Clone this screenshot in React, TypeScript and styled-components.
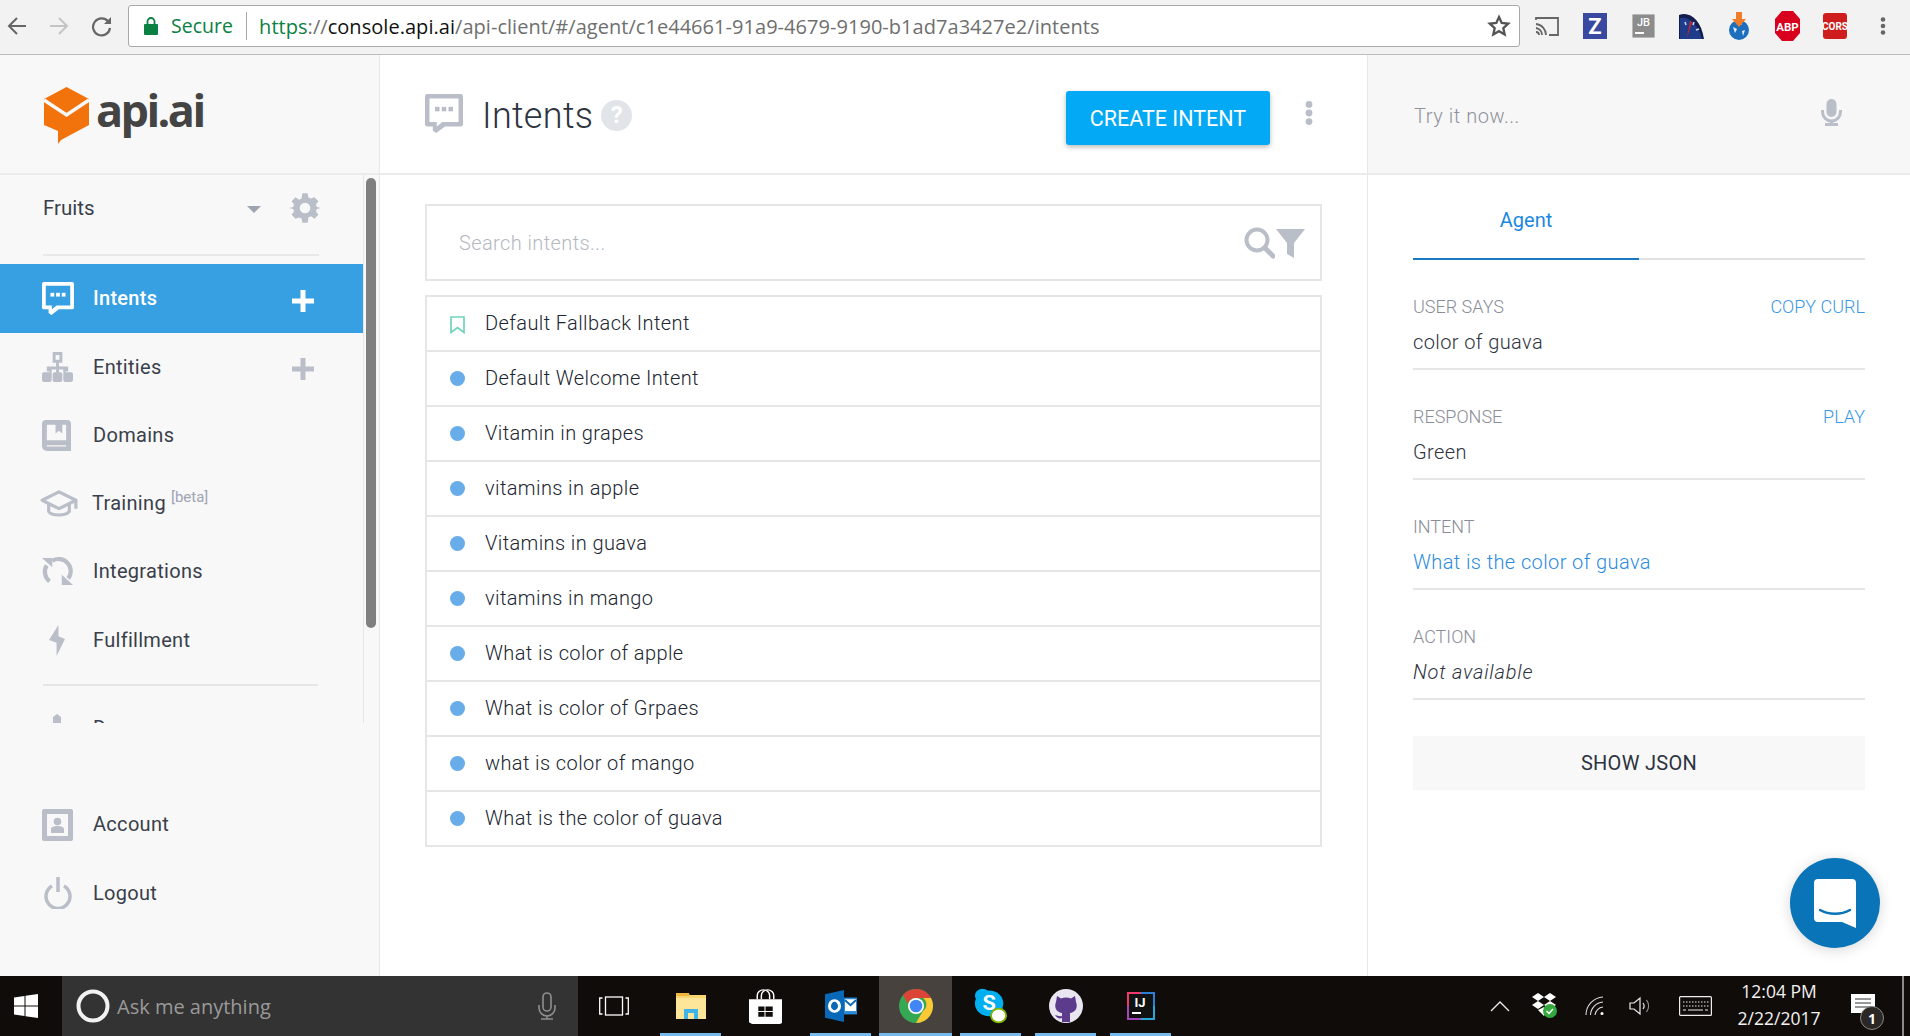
import React from "react";
import styled, { createGlobalStyle } from "styled-components";

const Global = createGlobalStyle`
  html, body { margin: 0; padding: 0; background: #fff; overflow: hidden; }
  body { font-family: Roboto, "Liberation Sans", sans-serif; }
  * { box-sizing: border-box; }
`;

const Page = styled.div`
  width: 1910px; height: 1036px; display: flex; flex-direction: column; overflow: hidden;
`;

/* browser chrome */
const ChromeBar = styled.div`
  height: 55px; flex: none; background: #f2f2f2; border-bottom: 1px solid #bdbdbd;
  display: flex; align-items: center; padding: 0 0 2px 7px;
`;
const NavIcons = styled.div`
  width: 121px; display: flex; gap: 22px; align-items: center; flex: none;
`;
const AddressBar = styled.div`
  width: 1392px; height: 42px; flex: none; background: #fff; border: 1px solid #a9a9a9; border-radius: 3px;
  display: flex; align-items: center; padding: 0 8px 0 15px;
  font-family: "Open Sans", sans-serif; font-size: 20px; color: #6f6f6f; white-space: nowrap; letter-spacing: .04px;
`;
const SecureText = styled.span`
  color: #0b8043; margin-left: 13px; padding-right: 13px; border-right: 1px solid #a9a9a9; line-height: 28px; font-size: 19.500px;
`;
const UrlWrap = styled.span` margin-left: 12px; flex: 1; `;
const UrlGreen = styled.span` color: #0b8043; `;
const UrlDark = styled.span` color: #111; `;
const ExtIcons = styled.div` flex: none; display: flex; align-items: center; padding-left: 3px; `;
const ExtCell = styled.span` width: 48px; flex: none; display: flex; justify-content: center; `;

/* body */
const Body = styled.div` flex: 1; display: flex; min-height: 0; `;
const Sidebar = styled.aside`
  width: 380px; flex: none; background: #f8f8f8; border-right: 1px solid #e8e8e8; display: flex; flex-direction: column;
`;
const LogoArea = styled.div`
  height: 120px; flex: none; border-bottom: 2px solid #ebebeb; display: flex; align-items: center; padding: 3px 0 0 43px; gap: 6px;
`;
const LogoText = styled.span`
  font-family: "Open Sans", sans-serif; font-weight: 700; font-size: 45px; letter-spacing: -2.600px; color: #444; line-height: 50px; padding-bottom: 12px;
`;
const ScrollRow = styled.div` display: flex; height: 548px; flex: none; `;
const NavScroll = styled.div`
  width: 364px; flex: none; border-right: 1px solid #e6e6e6; overflow: hidden; height: 100%;
`;
const Thumb = styled.div`
  width: 10px; height: 450px; margin: 3px 0 0 2px; background: #808080; border-radius: 5px;
`;
const AgentRow = styled.div`
  height: 81px; margin: 0 44px 0 43px; border-bottom: 2px solid #e8e8e8; display: flex; align-items: center;
  font-size: 20.500px; color: #3a3f4b; padding: 0 0 14px 0;
`;
const AgentName = styled.span` flex: 1; `;
const Caret = styled.span`
  width: 0; height: 0; border-left: 7px solid transparent; border-right: 7px solid transparent; border-top: 7px solid #9ea4b0; margin: 4px 28px 0 0;
`;
const GearWrap = styled.span` display: flex; margin-right: -2px; `;
const Gap = styled.div` height: ${p => p.$h}px; `;
const NavRow = styled.div`
  height: ${p => p.$h ?? 68.5}px; display: flex; align-items: center; padding: 0 49px 0 ${p => p.$pad ?? 42}px;
  background: ${p => (p.$active ? "#36a0e2" : "transparent")};
  color: ${p => (p.$active ? "#fff" : "#3a3f4b")};
  font-size: 20px; font-weight: ${p => (p.$active ? 500 : 400)}; letter-spacing: .3px;
`;
const NavIcon = styled.span`
  width: ${p => p.$w ?? 51}px; flex: none; display: flex; align-items: center;
`;
const NavLabel = styled.span` flex: 1; white-space: nowrap; padding-bottom: 1px; `;
const PlusWrap = styled.span` display: flex; margin-top: 4px; `;
const Beta = styled.sup`
  font-size: 15px; color: #9fa4b5; margin-left: 5px; position: relative; top: -8px; vertical-align: baseline; font-weight: 400; letter-spacing: 0;
`;
const NavDivider = styled.div` height: 2px; background: #e6e6e6; margin: 10px 45px 0 43px; `;
const BottomNav = styled.div` padding-top: 67.500px; `;

/* main */
const Main = styled.main` width: 988px; flex: none; border-right: 1px solid #e8e8e8; display: flex; flex-direction: column; `;
const MainHead = styled.div`
  height: 120px; flex: none; border-bottom: 2px solid #ebebeb; display: flex; align-items: center; padding: 0 0 0 45px;
`;
const Title = styled.h1`
  margin: 4px 0 0 19px; font-size: 36px; font-weight: 300; color: #2d3340; letter-spacing: .3px; line-height: 44px;
`;
const HelpCircle = styled.span`
  width: 31px; height: 31px; margin: 2px 0 0 8px; border-radius: 50%; background: #e1e4e9; color: #fff; font-weight: 700; font-size: 24px;
  display: flex; align-items: center; justify-content: center;
`;
const CreateBtn = styled.button`
  margin: 8px 0 0 auto; width: 204px; height: 54px; border: 0; border-radius: 3px; background: #03a9f4; color: #fff;
  font: 400 21.500px Roboto, sans-serif; box-shadow: 0 2px 5px rgba(0,0,0,.28); padding: 0;
`;
const DotsWrap = styled.div` width: 97px; display: flex; justify-content: center; padding: 0 20px 3px 0; `;
const MainContent = styled.div` padding: 29px 45px 0 45px; `;
const SearchBox = styled.div`
  height: 77px; border: 2px solid #e6e6e6; display: flex; align-items: center; justify-content: space-between;
  padding: 0 15px 0 32px; font-size: 20px; font-weight: 300; color: #b5b8c0; letter-spacing: .4px;
`;
const SearchIcons = styled.div` display: flex; align-items: center; gap: 1px; `;
const IntentList = styled.div` margin-top: 14px; border: 2px solid #e6e6e6; border-bottom: 0; `;
const IntentRow = styled.div`
  height: 55px; border-bottom: 2px solid #e6e6e6; display: flex; align-items: center; padding: 0 0 1px 23px;
  font-size: 20px; font-weight: 300; color: #20252f; letter-spacing: .4px;
`;
const Dot = styled.span`
  width: 15px; height: 15px; flex: none; border-radius: 50%; background: #68ade9; margin-right: 20px;
`;
const BookmarkBox = styled.span` width: 15px; flex: none; margin-right: 20px; display: flex; padding-top: 4px; `;

/* right */
const Right = styled.aside` flex: 1; display: flex; flex-direction: column; position: relative; `;
const TryHead = styled.div`
  height: 120px; flex: none; background: #f7f7f7; border-bottom: 2px solid #ebebeb; display: flex; align-items: center; justify-content: space-between;
  padding: 3px 68px 0 46px; font-size: 20px; font-weight: 300; color: #8f939c; letter-spacing: .55px;
`;
const MicWrap = styled.span` display: flex; margin-bottom: 7px; `;
const RightBody = styled.div` padding: 0 45px; `;
const Tabs = styled.div` height: 85px; border-bottom: 2px solid #e2e2e2; display: flex; `;
const Tab = styled.div`
  width: 226px; height: 85px; border-bottom: 2px solid #1a78c2; color: #1a88e0; font-size: 20px; display: flex; align-items: center; justify-content: center; padding-top: 6px;
`;
const Field = styled.div` height: 110px; border-bottom: 2px solid #e6e6e6; padding-top: 37px; `;
const FieldHead = styled.div`
  display: flex; justify-content: space-between; font-size: 18px; font-weight: 300; color: #898d97; line-height: 20px;
`;
const FieldLink = styled.span` color: #3b97e3; `;
const FieldValue = styled.div`
  margin-top: 13px; font-size: 20px; font-weight: 300; line-height: 24px; color: ${p => p.$c ?? "#2d3340"}; font-style: ${p => (p.$i ? "italic" : "normal")}; letter-spacing: ${p => (p.$i ? ".8px" : ".4px")};
`;
const JsonBtn = styled.div`
  margin-top: 36px; height: 53px; background: #f8f8f8; display: flex; align-items: center; justify-content: center; font-size: 20px; color: #2d3340; letter-spacing: .3px; box-shadow: 0 1px 1px rgba(0,0,0,.03);
`;
const ChatBubble = styled.div`
  position: absolute; left: 422px; bottom: 28px; width: 90px; height: 90px; border-radius: 50%; background: #0a74b8;
  box-shadow: 0 2px 14px rgba(0,0,0,.16); display: flex; align-items: center; justify-content: center;
`;

/* taskbar */
const Taskbar = styled.footer`
  height: 60px; flex: none; background: #100c09; display: flex; align-items: stretch; color: #fff; position: relative;
`;
const StartCell = styled.div` width: 62px; flex: none; display: flex; align-items: center; padding-left: 14px; `;
const SearchCell = styled.div`
  width: 516px; flex: none; background: #333; display: flex; align-items: center; padding: 0 22px 0 14px;
  font-family: "Open Sans", sans-serif; font-size: 20px; color: #9a9a9a;
`;
const AskText = styled.span` margin-left: 7px; flex: 1; `;
const TaskView = styled.div` width: 75px; flex: none; display: flex; align-items: center; padding-left: 21px; `;
const Apps = styled.div` display: flex; flex: none; `;
const AppCell = styled.div`
  width: 75px; display: flex; align-items: center; justify-content: center; position: relative; padding-top: 0;
  &::before {
    content: ""; position: absolute; left: 1px; right: 1px; top: 0; bottom: 0;
    background: ${p => (p.$on ? "#48423e" : "transparent")};
  }
  &::after {
    content: ""; position: absolute; left: ${p => (p.$on ? 1 : 7)}px; right: ${p => (p.$on ? 1 : 7)}px; bottom: 0; height: 3px;
    background: ${p => (p.$u ? "#76b9ed" : "transparent")};
  }
  & > svg { position: relative; }
`;
const Tray = styled.div` flex: 1; display: flex; align-items: center; padding-left: 307px; `;
const TrayItem = styled.span` width: ${p => p.$w}px; flex: none; display: flex; justify-content: center; `;
const Clock = styled.div`
  width: 108px; flex: none; text-align: center; font-family: "Open Sans", sans-serif; font-size: 17.500px; line-height: 27px; color: #f2f2f2; margin: 0 0 2px 0; white-space: nowrap;
`;
const Badge = styled.span`
  position: absolute; right: 26px; bottom: 6px; width: 24px; height: 24px; border-radius: 50%; border: 1px solid #888; background: #2b2724;
  color: #fff; font-family: "Open Sans", sans-serif; font-weight: 700; font-size: 14px; display: flex; align-items: center; justify-content: center;
`;
const EdgeLine = styled.span` position: absolute; right: 6px; top: 0; bottom: 0; width: 2px; background: #8a8a8a; `;

/* ---------- drawings ---------- */
const G = "#b9bec8";
const Speech = ({ c = G, dot = G, w = 38 }: { c?: string; dot?: string; w?: number }) => (
  <svg width={w} height={w * 1.05} viewBox="2 2 34 35.700">
    <path d="M4 2h30a2 2 0 0 1 2 2v25a2 2 0 0 1-2 2H20l-8 6-3-2v-4H4a2 2 0 0 1-2-2V4a2 2 0 0 1 2-2z" fill={c} />
    <path d="M6 6h26v21H17.500l-5 4v-4H6z" fill={c === "#fff" ? "#36a0e2" : "#fff"} />
    <rect x="11" y="13.500" width="4" height="4" fill={dot} /><rect x="17" y="13.500" width="4" height="4" fill={dot} /><rect x="23" y="13.500" width="4" height="4" fill={dot} />
  </svg>
);
const Plus = ({ c }: { c: string }) => (
  <svg width="22" height="22" viewBox="0 0 22 22"><path d="M8.500 0h5v8.500H22v5h-8.500V22h-5v-8.500H0v-5h8.500z" fill={c} /></svg>
);
const Entities = () => (
  <svg width="31" height="31" viewBox="0 0 32 32" fill={G}>
    <path fillRule="evenodd" d="M11 0h10v11h-3.500v4H27v5h-3v2h-2v-4h-4.500v4h-3V18H10v4H8v-2H5v-5h9.500v-4H11zm3 3v5h4V3z" />
    <rect y="21" width="10" height="10" rx="2" /><rect x="11" y="21" width="10" height="10" rx="2" /><rect x="22" y="21" width="10" height="10" rx="2" />
  </svg>
);
const Domains = () => (
  <svg width="29" height="31" viewBox="0 0 30 32" fill={G}>
    <path fillRule="evenodd" d="M4 0h22a4 4 0 0 1 4 4v28H5a5 5 0 0 1-5-5V4a4 4 0 0 1 4-4zm1 5v16h20V5h-4v9l-3.500-3-3.500 3V5zm0 21v1.500h20V26z" />
  </svg>
);
const Cap = () => (
  <svg width="40" height="30" viewBox="0 0 42 32" fill="none" stroke={G} strokeWidth="3.400">
    <path d="M21 3 3 12l18 9 18-9z" strokeLinejoin="round" />
    <path d="M10 16v8c3 5 18 5 22 0v-8" /><path d="M39 12v9" />
  </svg>
);
const Sync = () => (
  <svg width="31" height="31" viewBox="0 0 33 33" fill="none" stroke={G} strokeWidth="4.500">
    <path d="M8 27A13 13 0 0 1 5 10" /><path d="M11 5a13 13 0 0 1 17 19" /><path d="M0 2h11v10z" fill={G} stroke="none" /><path d="M33 31H21V20z" fill={G} stroke="none" />
  </svg>
);
const Bolt = () => (
  <svg width="17" height="31" viewBox="0 0 18 33" fill={G}><path d="M10 0v12l7 3-9 18v-14l-8-3z" /></svg>
);
const PeekIcon = () => (
  <svg width="30" height="32" viewBox="0 0 30 32" fill={G}><path d="M15 2l4 3v20h-8V5z" /></svg>
);
const Account = () => (
  <svg width="31" height="32" viewBox="0 0 31 32">
    <rect width="31" height="32" rx="2" fill={G} /><rect x="5" y="5" width="21" height="22" fill="#f8f8f8" />
    <circle cx="15.500" cy="12.500" r="3.800" fill={G} /><path d="M9 24v-4c0-2 3-3 6.500-3s6.500 1 6.500 3v4z" fill={G} />
  </svg>
);
const Power = () => (
  <svg width="28" height="32" viewBox="0 0 28 32" fill="none" stroke={G} strokeWidth="3.500">
    <path d="M8 9a12 12 0 1 0 12 0" /><path d="M14 0v15" />
  </svg>
);
const Gear = () => (
  <svg width="32" height="32" viewBox="0 0 24 24" fill={G}>
    <path fillRule="evenodd" d="M10 1h4l.6 3.100 1.900.8L19.100 4 22 6.900 20.200 9.500l.7 1.700L24 12v0l-3.100.8-.7 1.700 1.800 2.600L19.100 20l-2.600-1.900-1.900.8L14 23h-4l-.6-3.100-1.900-.8L4.900 20 2 17.100l1.800-2.600-.7-1.700L0 12l3.100-.8.7-1.700L2 6.900 4.900 4l2.600 1.900 1.900-.8zM12 8a4 4 0 1 0 0 8 4 4 0 0 0 0-8z" />
  </svg>
);
const Dots = ({ c = "#b9bec8", r = 3.400, s = 8.600 }: { c?: string; r?: number; s?: number }) => (
  <svg width="10" height="26" viewBox="0 0 10 26" fill={c}>
    <circle cx="5" cy={13 - s} r={r} /><circle cx="5" cy="13" r={r} /><circle cx="5" cy={13 + s} r={r} />
  </svg>
);
const Mic = ({ c = G }: { c?: string }) => (
  <svg width="21" height="27" viewBox="0 0 21 27" fill="none">
    <rect x="5.500" y="0" width="10" height="18" rx="5" fill={c} />
    <path d="M1.500 11v2a9 9 0 0 0 18 0v-2" stroke={c} strokeWidth="3" /><path d="M10.500 21v3M4 25.500h13" stroke={c} strokeWidth="3" />
  </svg>
);
const SearchFilter = () => (
  <>
    <svg width="31" height="32" viewBox="0 0 31 32" fill="none" stroke={G}>
      <circle cx="13" cy="13" r="10.500" strokeWidth="4" /><path d="m21 21 8 8" strokeWidth="5" strokeLinecap="round" />
    </svg>
    <svg width="29" height="30" viewBox="0 0 29 30" fill={G}><path d="M0 1h29L18 15v15l-7-4V15z" /></svg>
  </>
);
const Logo = () => (
  <svg width="47" height="57" viewBox="0 0 47 57">
    <path d="M23.500 0 46 12v26L18 53l-3 4v-13L1 38V12z" fill="#f2720c" />
    <path d="M1 13l22.500 15L46 13" fill="none" stroke="#f8f8f8" strokeWidth="3.500" />
  </svg>
);
const ChatGlyph = () => (
  <svg width="44" height="49" viewBox="0 0 44 49">
    <path d="M5 0h34a4 4 0 0 1 4 4v45l-14-6H5a4 4 0 0 1-4-4V4a4 4 0 0 1 4-4z" fill="#fff" />
    <path d="M7 31c9 5 21 5 30 0" fill="none" stroke="#0a74b8" strokeWidth="2.500" strokeLinecap="round" />
  </svg>
);

const Back = ({ c }: { c: string }) => (
  <svg width="20" height="20" viewBox="0 0 20 20" fill="none" stroke={c} strokeWidth="2"><path d="M19 10H2M10 2l-8 8 8 8" /></svg>
);
const Forward = ({ c }: { c: string }) => (
  <svg width="20" height="20" viewBox="0 0 20 20" fill="none" stroke={c} strokeWidth="2"><path d="M1 10h17M10 2l8 8-8 8" /></svg>
);
const Reload = () => (
  <svg width="21" height="21" viewBox="0 0 21 21" fill="none" stroke="#666" strokeWidth="2.200">
    <path d="M17.500 6A8.500 8.500 0 1 0 19 12" /><path d="M20 1v7h-7z" fill="#666" stroke="none" />
  </svg>
);
const Lock = () => (
  <svg width="14" height="18" viewBox="0 0 14 18"><path d="M3.500 7V4.500a3.500 3.500 0 0 1 7 0V7" fill="none" stroke="#0b8043" strokeWidth="1.800" /><rect y="7" width="14" height="11" rx="1" fill="#0b8043" /></svg>
);
const Star = () => (
  <svg width="24" height="24" viewBox="0 0 24 24" fill="none" stroke="#555" strokeWidth="2.300"><path d="m12 3 2.700 6 6.500.7-4.900 4.400 1.400 6.400-5.700-3.300-5.700 3.300 1.400-6.400L2.800 9.700 9.300 9z" /></svg>
);
const Cast = () => (
  <svg width="24" height="20" viewBox="0 0 24 20" fill="none" stroke="#666" strokeWidth="1.800">
    <path d="M1 4V2h22v17h-9" /><path d="M1 8a11 11 0 0 1 10 11M1 12a7 7 0 0 1 6 7" /><path d="M1 16a3 3 0 0 1 3 3" />
  </svg>
);
const ExtTile = ({ bg, label, size = 17, r = 0, w = 24, h = 26 }: { bg: string; label: string; size?: number; r?: number; w?: number; h?: number }) => (
  <svg width={w} height={h} viewBox={`0 0 ${w} ${h}`}>
    <rect width={w} height={h} rx={r} fill={bg} />
    <text x={w / 2} y={h / 2 + size * 0.36} textAnchor="middle" fill="#fff" fontFamily="Roboto, sans-serif" fontWeight="700" fontSize={size}>{label}</text>
  </svg>
);
const JBExt = () => (
  <svg width="23" height="24" viewBox="0 0 23 24">
    <rect width="23" height="24" fill="#8c8c8c" stroke="#e3e3e3" />
    <text x="11.500" y="12" textAnchor="middle" fill="#fff" fontFamily="Roboto, sans-serif" fontWeight="500" fontSize="11">JB</text>
    <rect x="3" y="18" width="9" height="2" fill="#fff" />
  </svg>
);
const Gauge = () => (
  <svg width="25" height="26" viewBox="0 0 25 26">
    <path d="M0 26V2c10-4 22 4 25 24z" fill="#131c4d" /><path d="M1 5c9-2 18 6 22 21H1z" fill="#1f3c8a" />
    <path d="M8 25 11 8l2 1z" fill="#e02020" /><path d="M6 9l1 3M15 9l-1 3M20 16l-3 1" stroke="#cfd8ee" strokeWidth="1.500" />
  </svg>
);
const GlobeDl = () => (
  <svg width="20" height="28" viewBox="0 0 20 28">
    <circle cx="10" cy="18" r="10" fill="#1d6fbd" /><path d="M4 15l4 2-2 4zM13 19l3-1-2 6zM10 10l3 3-4 0z" fill="#e6eef7" />
    <path d="M7 0h6v7h4l-7 8-7-8h4z" fill="#f07b28" />
  </svg>
);
const AbpExt = () => (
  <svg width="25" height="30" viewBox="0 0 25 30">
    <path d="M7 0h11l7 8v14l-7 8H7l-7-8V8z" fill="#d8001c" />
    <text x="12.500" y="19.500" textAnchor="middle" fill="#fff" fontFamily="Roboto, sans-serif" fontWeight="700" fontSize="11.500">ABP</text>
  </svg>
);

const WinLogo = () => (
  <svg width="24" height="24" viewBox="0 0 24 24" fill="#fff"><path d="M0 3.500 10.500 2v9.400H0zM11.500 1.800 24 0v11.400H11.500zM0 12.500h10.500V22L0 20.500zM11.500 12.500H24V24l-12.500-1.800z" /></svg>
);
const Cortana = () => (
  <svg width="34" height="34" viewBox="0 0 34 34" fill="none"><circle cx="17" cy="17" r="14.500" stroke="#f2f2f2" strokeWidth="4" /></svg>
);
const TaskViewIcon = () => (
  <svg width="30" height="20" viewBox="0 0 30 20" fill="none" stroke="#fff" strokeWidth="1.300">
    <rect x="6.500" y="1" width="17" height="18" /><path d="M3.500 2H.7v16h2.800M26.500 2h2.800v16h-2.800" />
  </svg>
);
const TaskMic = () => (
  <svg width="18" height="28" viewBox="0 0 18 28" fill="none" stroke="#8f8f8f" strokeWidth="1.600">
    <rect x="5" y="1" width="8" height="18" rx="4" /><path d="M1 13v3a8 8 0 0 0 16 0v-3M9 24v3M3 27h12" />
  </svg>
);
const Explorer = () => (
  <svg width="32" height="32" viewBox="0 0 32 32">
    <path d="M1 3h12l2 2h16v24H1z" fill="#f9d66e" /><rect x="1" y="3" width="13" height="3" fill="#f3b73c" />
    <path d="M1 8h30v21H1z" fill="#fde69a" /><path d="M9 29V19h14v10h-4v-6h-6v6z" fill="#3fb4e8" />
  </svg>
);
const Store = () => (
  <svg width="33" height="35" viewBox="0 0 32 38" preserveAspectRatio="none">
    <path d="M8 11V7a6 6 0 0 1 12 0v4M12 11V7a6 6 0 0 1 12 0v4" fill="none" stroke="#fff" strokeWidth="1.400" />
    <path d="M0 11h32v26l-2 1H3l-3-2z" fill="#fff" />
    <path d="M9 19h6v5H9zM16 19h7v5h-7zM9 25h6v5H9zM16 25h7v5h-7z" fill="#100c09" />
  </svg>
);
const Outlook = () => (
  <svg width="32" height="32" viewBox="0 0 32 38" preserveAspectRatio="none">
    <path d="M0 5 19 0v38L0 33z" fill="#0a68b8" /><rect x="19" y="9" width="13" height="20" fill="#2a8ad4" />
    <path d="M20 11h11v14H20z" fill="#fff" /><path d="M20 12l5.500 6L31 12" fill="none" stroke="#0a68b8" strokeWidth="2" />
    <ellipse cx="9.500" cy="19" rx="5" ry="6.500" fill="none" stroke="#fff" strokeWidth="3" />
  </svg>
);
const ChromeLogo = () => (
  <svg width="34" height="34" viewBox="0 0 34 34">
    <circle cx="17" cy="17" r="17" fill="#34a853" />
    <path d="M17 0a17 17 0 0 1 15 9H17a8 8 0 0 0-8 6L4 6a17 17 0 0 1 13-6z" fill="#db4437" />
    <path d="M32 9a17 17 0 0 1-15 25l7-12a8 8 0 0 0 0-13z" fill="#fcc934" />
    <circle cx="17" cy="17" r="8" fill="#fff" /><circle cx="17" cy="17" r="6.300" fill="#4285f4" />
  </svg>
);
const Skype = () => (
  <svg width="34" height="36" viewBox="0 0 36 42" preserveAspectRatio="none">
    <circle cx="16" cy="18" r="15" fill="#00aff0" /><circle cx="9" cy="9" r="8" fill="#00aff0" /><circle cx="23" cy="27" r="8" fill="#00aff0" />
    <text x="16" y="26" textAnchor="middle" fill="#fff" fontFamily="Roboto, sans-serif" fontWeight="700" fontSize="23">S</text>
    <circle cx="26" cy="32" r="8" fill="#fff" stroke="#7db500" strokeWidth="2" />
  </svg>
);
const GitHubIcon = () => (
  <svg width="34" height="34" viewBox="0 0 34 34">
    <circle cx="17" cy="17" r="17" fill="#e9e6f2" />
    <path d="M8 7l4 2.500a13 13 0 0 1 10 0L26 7l1 6c2 5 0 10-6 11v9h-8v-4c-3 1-5 0-7-3 2 0 4 2 7 1v-3C7 23 5 18 7 13z" fill="#5c3a8c" />
  </svg>
);
const IJIcon = () => (
  <svg width="28" height="28" viewBox="0 0 28 28">
    <path d="M0 0h14v2H2v12H0z" fill="#f0396d" /><path d="M14 0h14v14h-2V2H14z" fill="#2a7fd6" />
    <path d="M0 14h2v12h12v2H0z" fill="#a446b8" /><path d="M26 14h2v14H14v-2h12z" fill="#2aa7d9" />
    <rect x="2" y="2" width="24" height="24" fill="#111" />
    <text x="13" y="15" textAnchor="middle" fill="#fff" fontFamily="Roboto, sans-serif" fontWeight="700" fontSize="13">IJ</text>
    <rect x="5" y="20" width="9" height="2" fill="#fff" />
  </svg>
);
const Chevron = () => (
  <svg width="20" height="11" viewBox="0 0 20 11" fill="none" stroke="#eee" strokeWidth="1.300"><path d="m1 10 9-9 9 9" /></svg>
);
const Dropbox = () => (
  <svg width="26" height="26" viewBox="0 0 26 26">
    <path d="M6 0l6 4-6 4-6-4zM18 0l6 4-6 4-6-4zM6 8l6 4-6 4-6-4zM18 8l6 4-6 4-6-4zM6 17l6-3 2 5-2 4z" fill="#fff" />
    <circle cx="18" cy="18" r="7" fill="#34a83f" /><path d="m14.500 18 2.500 2.500 4-4.500" fill="none" stroke="#fff" strokeWidth="1.500" />
  </svg>
);
const Wifi = () => (
  <svg width="20" height="20" viewBox="0 0 20 20" fill="none" stroke="#ddd" strokeWidth="1.100">
    <path d="M1 19A18 18 0 0 1 18 1M5.500 19A13.500 13.500 0 0 1 18 6M10 19a9 9 0 0 1 8-8" /><circle cx="17" cy="17.500" r="1.500" fill="#fff" stroke="none" />
  </svg>
);
const Speaker = () => (
  <svg width="23" height="20" viewBox="0 0 23 20" fill="none" stroke="#eee" strokeWidth="1.200">
    <path d="M1 7h4l6-5v16l-6-5H1z" /><path d="M14 7a5 5 0 0 1 0 6" /><path d="M17.500 4a10 10 0 0 1 0 12" stroke="#999" />
  </svg>
);
const Keyboard = () => (
  <svg width="33" height="20" viewBox="0 0 33 20" fill="none" stroke="#eee" strokeWidth="1.200">
    <rect x=".6" y=".6" width="31.800" height="18.800" rx="1" /><path d="M4 6h26M4 10h26" strokeDasharray="1.500 1.500" /><path d="M4 14h3M9 14h15M26 14h3" />
  </svg>
);
const Notify = () => (
  <svg width="24" height="24" viewBox="0 0 24 24">
    <path d="M0 0h24v19H13l-3 4v-4H0z" fill="#fff" /><path d="M4 5h16M4 9h16M4 13h16" stroke="#333" strokeWidth="1" />
  </svg>
);
const BookmarkIcon = () => (
  <svg width="15" height="18" viewBox="0 0 15 18" fill="none" stroke="#6ed5bc" strokeWidth="1.700"><path d="M1 1h13v15.500l-6.500-5-6.500 5z" /></svg>
);

const intents = ["Default Welcome Intent", "Vitamin in grapes", "vitamins in apple", "Vitamins in guava", "vitamins in mango", "What is color of apple", "What is color of Grpaes", "what is color of mango", "What is the color of guava"];

export default function App() {
  return (
    <Page>
      <Global />
      <ChromeBar>
        <NavIcons><Back c="#666" /><Forward c="#c4c4c4" /><Reload /></NavIcons>
        <AddressBar>
          <Lock />
          <SecureText>Secure</SecureText>
          <UrlWrap><UrlGreen>https</UrlGreen>://<UrlDark>console.api.ai</UrlDark>/api-client/#/agent/c1e44661-91a9-4679-9190-b1ad7a3427e2/intents</UrlWrap>
          <Star />
        </AddressBar>
        <ExtIcons>
          <ExtCell><Cast /></ExtCell>
          <ExtCell><ExtTile bg="#3949a0" label="Z" size={22} /></ExtCell>
          <ExtCell><JBExt /></ExtCell>
          <ExtCell><Gauge /></ExtCell>
          <ExtCell><GlobeDl /></ExtCell>
          <ExtCell><AbpExt /></ExtCell>
          <ExtCell><ExtTile bg="#cf1d1d" label="CORS" size={10} r={3} /></ExtCell>
          <ExtCell><Dots c="#666" r={2.300} s={6.500} /></ExtCell>
        </ExtIcons>
      </ChromeBar>
      <Body>
        <Sidebar>
          <LogoArea><Logo /><LogoText>api.ai</LogoText></LogoArea>
          <ScrollRow>
            <NavScroll>
              <AgentRow><AgentName>Fruits</AgentName><Caret /><GearWrap><Gear /></GearWrap></AgentRow>
              <Gap $h={8} />
              <NavRow $active $h={69}><NavIcon><Speech c="#fff" dot="#fff" w={32} /></NavIcon><NavLabel>Intents</NavLabel><PlusWrap><Plus c="#fff" /></PlusWrap></NavRow>
              <NavRow $h={68}><NavIcon><Entities /></NavIcon><NavLabel>Entities</NavLabel><PlusWrap><Plus c={G} /></PlusWrap></NavRow>
              <NavRow><NavIcon><Domains /></NavIcon><NavLabel>Domains</NavLabel></NavRow>
              <NavRow $pad={39} $h={68}><NavIcon $w={53}><Cap /></NavIcon><NavLabel>Training<Beta>[beta]</Beta></NavLabel></NavRow>
              <NavRow><NavIcon><Sync /></NavIcon><NavLabel>Integrations</NavLabel></NavRow>
              <NavRow $pad={49} $h={68}><NavIcon $w={44}><Bolt /></NavIcon><NavLabel>Fulfillment</NavLabel></NavRow>
              <NavDivider />
              <Gap $h={22} />
              <NavRow $h={40}><NavIcon><PeekIcon /></NavIcon><NavLabel>Docs</NavLabel></NavRow>
            </NavScroll>
            <Thumb />
          </ScrollRow>
          <BottomNav>
            <NavRow><NavIcon><Account /></NavIcon><NavLabel>Account</NavLabel></NavRow>
            <NavRow $pad={44}><NavIcon $w={49}><Power /></NavIcon><NavLabel>Logout</NavLabel></NavRow>
          </BottomNav>
        </Sidebar>
        <Main>
          <MainHead>
            <Speech w={38} />
            <Title>Intents</Title>
            <HelpCircle>?</HelpCircle>
            <CreateBtn>CREATE INTENT</CreateBtn>
            <DotsWrap><Dots /></DotsWrap>
          </MainHead>
          <MainContent>
            <SearchBox>Search intents...<SearchIcons><SearchFilter /></SearchIcons></SearchBox>
            <IntentList>
              <IntentRow><BookmarkBox><BookmarkIcon /></BookmarkBox>Default Fallback Intent</IntentRow>
              {intents.map(t => <IntentRow key={t}><Dot />{t}</IntentRow>)}
            </IntentList>
          </MainContent>
        </Main>
        <Right>
          <TryHead>Try it now...<MicWrap><Mic /></MicWrap></TryHead>
          <RightBody>
            <Tabs><Tab>Agent</Tab></Tabs>
            <Field><FieldHead>USER SAYS<FieldLink>COPY CURL</FieldLink></FieldHead><FieldValue>color of guava</FieldValue></Field>
            <Field><FieldHead>RESPONSE<FieldLink>PLAY</FieldLink></FieldHead><FieldValue>Green</FieldValue></Field>
            <Field><FieldHead>INTENT</FieldHead><FieldValue $c="#2b8be0">What is the color of guava</FieldValue></Field>
            <Field><FieldHead>ACTION</FieldHead><FieldValue $i>Not available</FieldValue></Field>
            <JsonBtn>SHOW JSON</JsonBtn>
          </RightBody>
          <ChatBubble><ChatGlyph /></ChatBubble>
        </Right>
      </Body>
      <Taskbar>
        <StartCell><WinLogo /></StartCell>
        <SearchCell><Cortana /><AskText>Ask me anything</AskText><TaskMic /></SearchCell>
        <TaskView><TaskViewIcon /></TaskView>
        <Apps>
          <AppCell $u><Explorer /></AppCell>
          <AppCell><Store /></AppCell>
          <AppCell $u><Outlook /></AppCell>
          <AppCell $u $on><ChromeLogo /></AppCell>
          <AppCell $u><Skype /></AppCell>
          <AppCell $u><GitHubIcon /></AppCell>
          <AppCell $u><IJIcon /></AppCell>
        </Apps>
        <Tray>
          <TrayItem $w={30}><Chevron /></TrayItem>
          <TrayItem $w={60}><Dropbox /></TrayItem>
          <TrayItem $w={40}><Wifi /></TrayItem>
          <TrayItem $w={50}><Speaker /></TrayItem>
          <TrayItem $w={60}><Keyboard /></TrayItem>
          <Clock>12:04 PM<br />2/22/2017</Clock>
          <TrayItem $w={60}><Notify /></TrayItem>
        </Tray>
        <Badge>1</Badge>
        <EdgeLine />
      </Taskbar>
    </Page>
  );
}
